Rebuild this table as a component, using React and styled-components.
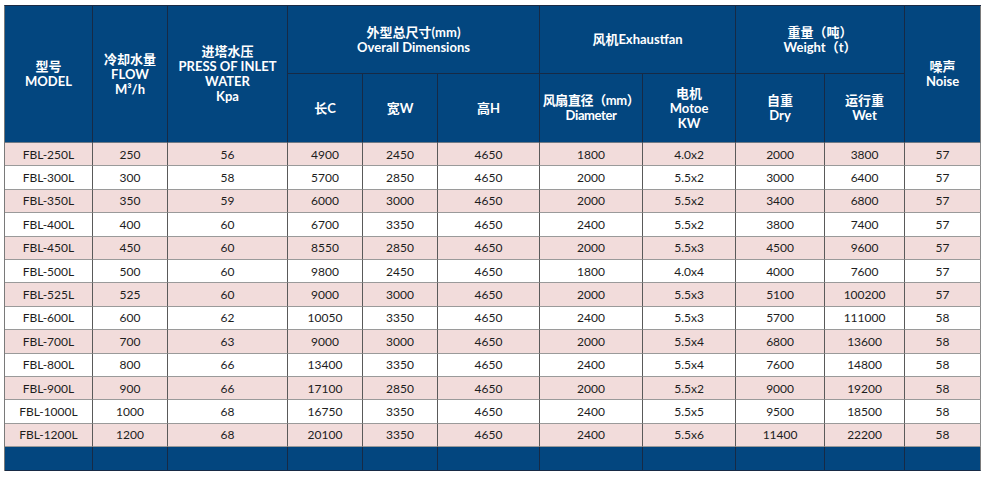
import React from "react";
import styled, { createGlobalStyle } from "styled-components";

const Global = createGlobalStyle`
  html, body { margin: 0; padding: 0; background: #ffffff; }
  body { font-family: Lato, "Noto Sans CJK SC", sans-serif; }
`;

const Page = styled.div`
  padding: 5px 0 0 4px;
`;

const Table = styled.table`
  border-collapse: separate;
  border-spacing: 0;
  width: 976px;
  table-layout: fixed;
  border-left: 1px solid #7a7a7a;
  border-top: 1px solid #1b2a44;
  font-family: Lato, "Noto Sans CJK SC", sans-serif;
`;

const HeadCell = styled.th`
  box-sizing: border-box;
  background: #03467f;
  color: #ffffff;
  font-size: 13px;
  font-weight: 700;
  line-height: 15px;
  text-align: center;
  vertical-align: middle;
  padding: 0;
  white-space: nowrap;
  letter-spacing: ${(p) => (p.$tight ? "-0.4px" : "normal")};
  height: ${(p) => p.$h || 68}px;
  border-right: 1px solid ${(p) => (p.$last ? "#7a7a7a" : "#172a45")};
  border-bottom: 1px solid ${(p) => (p.$bottom ? "#6f7a86" : "#172a45")};
`;

const Cell = styled.td`
  box-sizing: border-box;
  height: 23.4px;
  padding: 0;
  text-align: center;
  vertical-align: middle;
  font-size: 12px;
  color: #1d1d1d;
  background: ${(p) => (p.$pink ? "#f2dcdb" : "#ffffff")};
  border-right: 1px solid ${(p) => (p.$last ? "#8a8a8a" : "#5a5a5a")};
  border-bottom: 1px solid #9a9a9a;
`;

const FootCell = styled.td`
  box-sizing: border-box;
  height: 24px;
  padding: 0;
  background: #03467f;
  border-right: 1px solid ${(p) => (p.$last ? "#7a7a7a" : "#172a45")};
  border-bottom: 1px solid #172a45;
`;

const widths = [88, 75, 120, 75, 75, 102, 103, 93, 89, 80, 76];

const rows = [
  ["FBL-250L", 250, 56, 4900, 2450, 4650, 1800, "4.0x2", 2000, 3800, 57],
  ["FBL-300L", 300, 58, 5700, 2850, 4650, 2000, "5.5x2", 3000, 6400, 57],
  ["FBL-350L", 350, 59, 6000, 3000, 4650, 2000, "5.5x2", 3400, 6800, 57],
  ["FBL-400L", 400, 60, 6700, 3350, 4650, 2400, "5.5x2", 3800, 7400, 57],
  ["FBL-450L", 450, 60, 8550, 2850, 4650, 2000, "5.5x3", 4500, 9600, 57],
  ["FBL-500L", 500, 60, 9800, 2450, 4650, 1800, "4.0x4", 4000, 7600, 57],
  ["FBL-525L", 525, 60, 9000, 3000, 4650, 2000, "5.5x3", 5100, 100200, 57],
  ["FBL-600L", 600, 62, 10050, 3350, 4650, 2400, "5.5x3", 5700, 111000, 58],
  ["FBL-700L", 700, 63, 9000, 3000, 4650, 2000, "5.5x4", 6800, 13600, 58],
  ["FBL-800L", 800, 66, 13400, 3350, 4650, 2400, "5.5x4", 7600, 14800, 58],
  ["FBL-900L", 900, 66, 17100, 2850, 4650, 2000, "5.5x2", 9000, 19200, 58],
  ["FBL-1000L", 1000, 68, 16750, 3350, 4650, 2400, "5.5x5", 9500, 18500, 58],
  ["FBL-1200L", 1200, 68, 20100, 3350, 4650, 2400, "5.5x6", 11400, 22200, 58],
];

const Lines = ({ children }) =>
  children.map((t, i) => (
    <React.Fragment key={i}>
      {i > 0 && <br />}
      {t}
    </React.Fragment>
  ));

export default function App() {
  return (
    <Page>
      <Global />
      <Table>
        <colgroup>
          {widths.map((w, i) => (
            <col key={i} style={{ width: w }} />
          ))}
        </colgroup>
        <thead>
          <tr>
            <HeadCell rowSpan={2} $bottom>
              <Lines>{["型号", "MODEL"]}</Lines>
            </HeadCell>
            <HeadCell rowSpan={2} $bottom>
              <Lines>{["冷却水量", "FLOW", "M³/h"]}</Lines>
            </HeadCell>
            <HeadCell rowSpan={2} $bottom>
              <Lines>{["进塔水压", "PRESS OF INLET", "WATER", "Kpa"]}</Lines>
            </HeadCell>
            <HeadCell colSpan={3} $h={68}>
              <Lines>{["外型总尺寸(mm)", "Overall Dimensions"]}</Lines>
            </HeadCell>
            <HeadCell colSpan={2} $h={68}>
              风机Exhaustfan
            </HeadCell>
            <HeadCell colSpan={2} $h={68}>
              <Lines>{["重量（吨）", "Weight（t）"]}</Lines>
            </HeadCell>
            <HeadCell rowSpan={2} $bottom $last>
              <Lines>{["噪声", "Noise"]}</Lines>
            </HeadCell>
          </tr>
          <tr>
            <HeadCell $h={69} $bottom>长C</HeadCell>
            <HeadCell $h={69} $bottom>宽W</HeadCell>
            <HeadCell $h={69} $bottom>高H</HeadCell>
            <HeadCell $h={69} $bottom $tight>
              <Lines>{["风扇直径（mm）", "Diameter"]}</Lines>
            </HeadCell>
            <HeadCell $h={69} $bottom>
              <Lines>{["电机", "Motoe", "KW"]}</Lines>
            </HeadCell>
            <HeadCell $h={69} $bottom>
              <Lines>{["自重", "Dry"]}</Lines>
            </HeadCell>
            <HeadCell $h={69} $bottom>
              <Lines>{["运行重", "Wet"]}</Lines>
            </HeadCell>
          </tr>
        </thead>
        <tbody>
          {rows.map((r, ri) => (
            <tr key={ri}>
              {r.map((v, ci) => (
                <Cell key={ci} $pink={ri % 2 === 0} $last={ci === r.length - 1}>
                  {v}
                </Cell>
              ))}
            </tr>
          ))}
          <tr>
            {widths.map((_, ci) => (
              <FootCell key={ci} $last={ci === widths.length - 1} />
            ))}
          </tr>
        </tbody>
      </Table>
    </Page>
  );
}
